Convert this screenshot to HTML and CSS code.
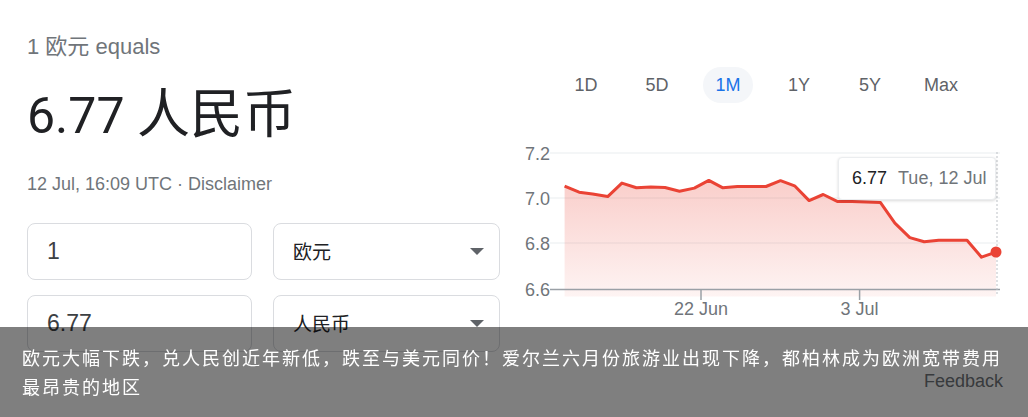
FILE: index.html
```html
<!DOCTYPE html>
<html lang="zh">
<head>
    <meta charset="UTF-8">
    <meta name="viewport" content="width=device-width, initial-scale=1.0">
    <title>欧元 to 人民币</title>
    <link rel="stylesheet" href="styles.css">
</head>
<body>
    <div class="page">
        <section class="converter">
            <div class="lead">1 欧元 equals</div>
            <div class="rate">6.77 <span class="unit">人民币</span></div>
            <div class="stamp">12 Jul, 16:09 UTC · Disclaimer</div>

            <div class="fields">
                <div class="field amount">1</div>
                <div class="field currency">欧元<span class="arrow"></span></div>
                <div class="field amount">6.77</div>
                <div class="field currency">人民币<span class="arrow"></span></div>
            </div>
        </section>

        <section class="history">
            <div class="ranges">
                <span class="range">1D</span>
                <span class="range">5D</span>
                <span class="range active">1M</span>
                <span class="range">1Y</span>
                <span class="range">5Y</span>
                <span class="range">Max</span>
            </div>

            <div class="chart">
                <svg width="500" height="180" viewBox="0 0 500 180">
                    <defs>
                        <linearGradient id="areaFill" x1="0" y1="0" x2="0" y2="1">
                            <stop offset="0" stop-color="#ea4335" stop-opacity="0.26"/>
                            <stop offset="1" stop-color="#ea4335" stop-opacity="0.06"/>
                        </linearGradient>
                    </defs>

                    <!-- grid -->
                    <line x1="40" y1="13" x2="490" y2="13" stroke="#f1f3f4" stroke-width="1.5"/>
                    <line x1="40" y1="58" x2="490" y2="58" stroke="#f1f3f4" stroke-width="1.5"/>
                    <line x1="40" y1="103" x2="490" y2="103" stroke="#f1f3f4" stroke-width="1.5"/>

                    <g class="axis-label" text-anchor="end">
                        <text x="40" y="19.5">7.2</text>
                        <text x="40" y="64.5">7.0</text>
                        <text x="40" y="109.5">6.8</text>
                        <text x="40" y="156">6.6</text>
                    </g>

                    <path fill="url(#areaFill)" d="M54.6,156.6 L54.6,46.1 69.1,52.2 82.6,53.9 97.7,56.6 111.9,43.1 126.4,47.8 140.8,47.1 155,47.5 169.5,51.2 184.3,48.1 198.8,40.4 212.9,47.8 227.4,46.5 241.9,46.5 256,46.5 270.5,40.7 284.6,45.8 299.1,60.6 313.2,54.5 327.7,61.6 341.9,61.6 356.3,62 370.5,62.6 384.9,83.2 399.8,97.6 414.2,101.7 428.7,100.3 442.9,100.3 457,100.3 471.5,117.2 486,112.1 L486,156.6 Z"/>

                    <!-- baseline and ticks -->
                    <line x1="40" y1="149.5" x2="490" y2="149.5" stroke="#9aa0a6" stroke-width="1.5"/>
                    <line x1="191" y1="149.5" x2="191" y2="160" stroke="#9aa0a6" stroke-width="1.5"/>
                    <line x1="349.6" y1="149.5" x2="349.6" y2="160" stroke="#9aa0a6" stroke-width="1.5"/>

                    <g class="axis-label" text-anchor="middle">
                        <text x="191" y="174.5">22 Jun</text>
                        <text x="349.6" y="174.5">3 Jul</text>
                    </g>

                    <line x1="487" y1="12" x2="487" y2="156" stroke="#bdc1c6" stroke-width="1" stroke-dasharray="2 2"/>

                    <polyline fill="none" stroke="#ea4335" stroke-width="3" stroke-linejoin="round" points="54.6,46.1 69.1,52.2 82.6,53.9 97.7,56.6 111.9,43.1 126.4,47.8 140.8,47.1 155,47.5 169.5,51.2 184.3,48.1 198.8,40.4 212.9,47.8 227.4,46.5 241.9,46.5 256,46.5 270.5,40.7 284.6,45.8 299.1,60.6 313.2,54.5 327.7,61.6 341.9,61.6 356.3,62 370.5,62.6 384.9,83.2 399.8,97.6 414.2,101.7 428.7,100.3 442.9,100.3 457,100.3 471.5,117.2 486,112.1"/>
                    <circle cx="486" cy="112" r="5.5" fill="#ea4335"/>
                </svg>

                <div class="tooltip">
                    <span class="tip-value">6.77</span>
                    <span class="tip-date">Tue, 12 Jul</span>
                </div>
            </div>

            <div class="feedback">Feedback</div>
        </section>
    </div>

    <div class="news">
        欧元大幅下跌，兑人民创近年新低，跌至与美元同价！爱尔兰六月份旅游业出现下降，都柏林成为欧洲宽带费用最昂贵的地区
    </div>
</body>
</html>
```

FILE: styles.css
```css
body {
    margin: 0;
    font-family: 'Liberation Sans', Arial, 'Noto Sans CJK SC', sans-serif;
    background-color: #fff;
    color: #202124;
}

.page {
    display: flex;
    padding-left: 27px;
}

/* left side */
.converter {
    width: 473px;
}

.lead {
    margin-top: 33px;
    font-size: 22px;
    line-height: 28px;
    color: #70757a;
}

.rate {
    margin-top: 19px;
    font-family: Roboto, 'Noto Sans CJK SC', sans-serif;
    font-size: 50px;
    line-height: 60px;
    color: #202124;
}

.unit {
    font-family: 'Noto Sans CJK SC', sans-serif;
    font-size: 53px;
    line-height: 60px;
}

.stamp {
    margin-top: 27px;
    font-size: 18px;
    line-height: 22px;
    color: #70757a;
}

.fields {
    display: grid;
    grid-template-columns: 225px 227px;
    grid-auto-rows: 57px;
    column-gap: 21px;
    row-gap: 15px;
    margin-top: 28px;
}

.field {
    display: flex;
    align-items: center;
    border: 1px solid #dadce0;
    border-radius: 8px;
    padding-left: 19px;
    box-sizing: border-box;
}

.amount {
    font-size: 23px;
    color: #3c4043;
}

.currency {
    font-family: 'Noto Sans CJK SC', sans-serif;
    font-size: 19px;
    color: #202124;
    justify-content: space-between;
    padding-right: 15px;
    padding-bottom: 3px;
}

.arrow {
    width: 0;
    height: 0;
    border-left: 7px solid transparent;
    border-right: 7px solid transparent;
    border-top: 7px solid #5f6368;
    margin-top: 3px;
}

/* right side */
.history {
    width: 500px;
    margin-left: 10px;
}

.ranges {
    display: flex;
    gap: 21px;
    padding-left: 51px;
    margin-top: 67px;
}

.range {
    width: 50px;
    height: 36px;
    line-height: 36px;
    text-align: center;
    border-radius: 18px;
    font-size: 18px;
    color: #5f6368;
}

.range.active {
    background-color: #f4f6f9;
    color: #1a73e8;
}

.chart {
    position: relative;
    margin-top: 37px;
    height: 180px;
}

.chart svg {
    display: block;
}

.axis-label {
    font-family: 'Liberation Sans', Arial, sans-serif;
    font-size: 18px;
    fill: #70757a;
}

.tooltip {
    position: absolute;
    left: 328px;
    top: 17px;
    width: 158px;
    height: 43px;
    box-sizing: border-box;
    padding-left: 13px;
    display: flex;
    align-items: center;
    background-color: #fff;
    border: 1px solid #ebedef;
    border-radius: 4px;
    box-shadow: 0 1px 3px rgba(0, 0, 0, 0.15);
    font-size: 18px;
    white-space: nowrap;
}

.tip-value {
    color: #202124;
}

.tip-date {
    margin-left: 11px;
    color: #70757a;
}

.feedback {
    margin-top: 51px;
    padding-right: 7px;
    text-align: right;
    font-size: 18px;
    color: #70757a;
}

/* news banner over the bottom */
.news {
    position: fixed;
    left: 0;
    right: 0;
    bottom: 0;
    height: 90px;
    box-sizing: border-box;
    padding: 16px 22px 0;
    background-color: rgba(0, 0, 0, 0.5);
    color: #fff;
    font-family: 'Noto Sans CJK SC', sans-serif;
    font-size: 18px;
    line-height: 29px;
    letter-spacing: 2px;
}
```
